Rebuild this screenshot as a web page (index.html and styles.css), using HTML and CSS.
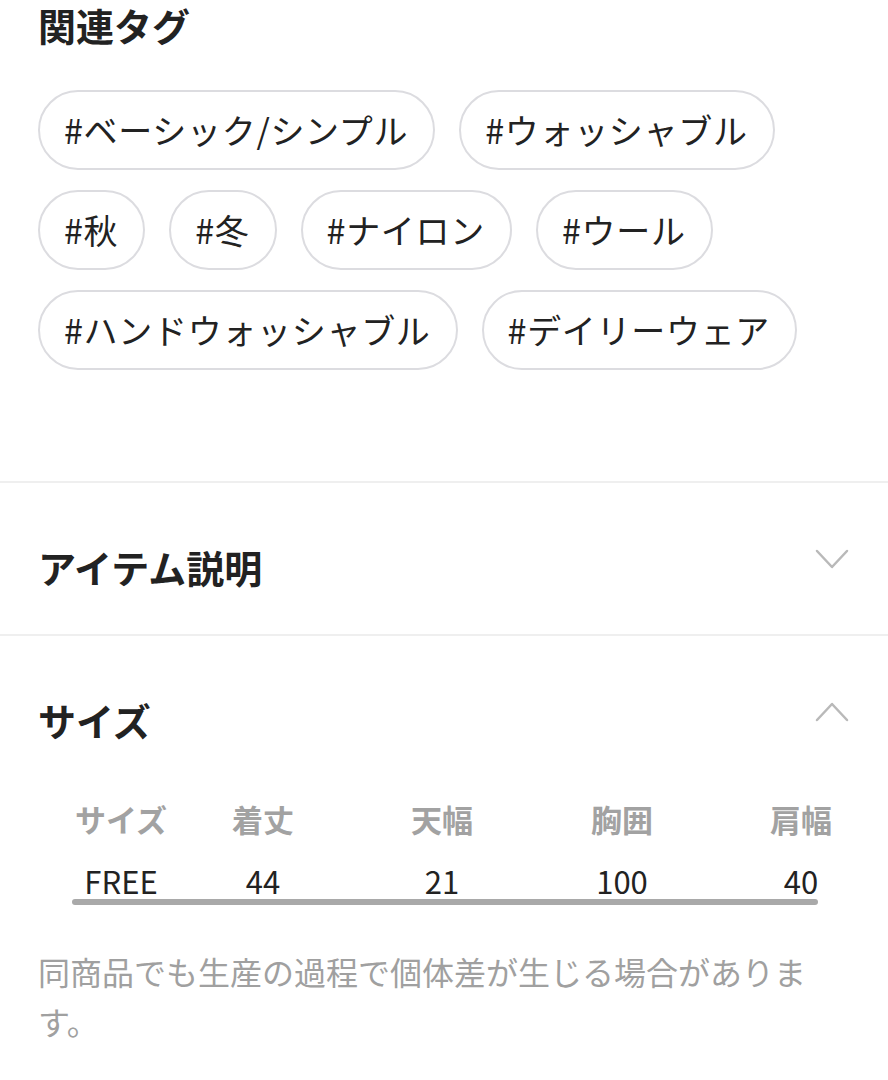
FILE: index.html
```html
<!DOCTYPE html>
<html lang="ja">
<head>
    <meta charset="utf-8">
    <meta name="viewport" content="width=888">
    <title>関連タグ / サイズ</title>
    <link rel="stylesheet" href="styles.css">
</head>
<body>
    <section class="tags">
        <h2 class="tags-title">関連タグ</h2>
        <ul class="tag-list">
            <li class="tag">#ベーシック/シンプル</li>
            <li class="tag">#ウォッシャブル</li>
            <li class="tag">#秋</li>
            <li class="tag">#冬</li>
            <li class="tag">#ナイロン</li>
            <li class="tag">#ウール</li>
            <li class="tag">#ハンドウォッシャブル</li>
            <li class="tag">#デイリーウェア</li>
        </ul>
    </section>

    <section class="panel panel-closed">
        <div class="panel-head">
            <h2 class="panel-title">アイテム説明</h2>
            <svg class="chevron" width="34" height="22" viewBox="0 0 34 22">
                <polyline points="2,3 17,19 32,3" fill="none" stroke="#b9b9b9" stroke-width="2.5" stroke-linecap="round" stroke-linejoin="round"/>
            </svg>
        </div>
    </section>

    <section class="panel panel-open">
        <div class="panel-head">
            <h2 class="panel-title">サイズ</h2>
            <svg class="chevron" width="34" height="22" viewBox="0 0 34 22">
                <polyline points="2,19 17,3 32,19" fill="none" stroke="#b9b9b9" stroke-width="2.5" stroke-linecap="round" stroke-linejoin="round"/>
            </svg>
        </div>
        <div class="size-table">
            <div class="size-row size-head">
                <span>サイズ</span>
                <span>着丈</span>
                <span>天幅</span>
                <span>胸囲</span>
                <span>肩幅</span>
            </div>
            <div class="size-row size-values">
                <span>FREE</span>
                <span>44</span>
                <span>21</span>
                <span>100</span>
                <span>40</span>
            </div>
            <div class="scrollbar"></div>
        </div>
        <p class="note">同商品でも生産の過程で個体差が生じる場合があります。</p>
    </section>
</body>
</html>
```

FILE: styles.css
```css
html, body {
    margin: 0;
    padding: 0;
    background: #fff;
}
body {
    width: 888px;
    font-family: "Noto Sans CJK JP", "Noto Sans", sans-serif;
    color: #222;
}
h2 {
    margin: 0;
    font-weight: 700;
}

/* related tags */
.tags {
    padding: 3px 38px 111px;
}
.tags-title {
    font-size: 38px;
    line-height: 44px;
}
.tag-list {
    list-style: none;
    margin: 43px 0 0;
    padding: 0;
    display: flex;
    flex-wrap: wrap;
    gap: 20px 24px;
}
.tag {
    font-size: 34px;
    line-height: 48px;
    letter-spacing: 0.7px;
    padding: 14px 25px 14px 24px;
    border: 2px solid #dcdce0;
    border-radius: 40px;
    white-space: nowrap;
}

/* accordion panels */
.panel {
    border-top: 2px solid #efefef;
}
.panel-head {
    display: flex;
    justify-content: space-between;
    align-items: center;
    padding: 0 39px 0 38px;
    height: 151px;
}
.panel-title {
    font-size: 38px;
    line-height: 48px;
    padding-top: 16px;
}

/* size table */
.size-table {
    margin: 12px 0 0 72px;
    width: 746px;
}
.size-row {
    display: grid;
    grid-template-columns: 98px 186px 172px 188px 170px;
    text-align: center;
    white-space: nowrap;
}
.size-head {
    font-size: 31px;
    line-height: 40px;
    font-weight: 700;
    color: #a2a2a2;
}
.size-values {
    margin-top: 22px;
    font-size: 31px;
    line-height: 40px;
    color: #222;
}
.scrollbar {
    margin-top: -2px;
    height: 6px;
    border-radius: 3px;
    background: #a9a9a9;
}
.note {
    margin: 41px 0 0;
    padding: 0 60px 0 38px;
    font-size: 32px;
    line-height: 50px;
    color: #a0a0a0;
}
```
